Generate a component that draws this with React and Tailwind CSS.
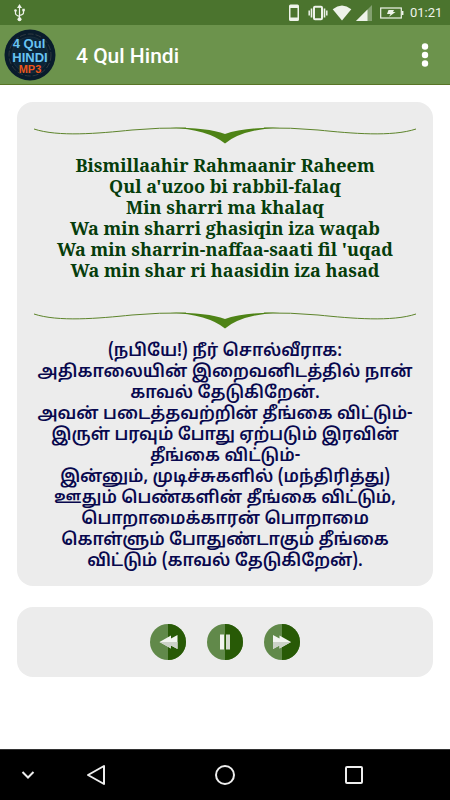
const VERSE = `Bismillaahir Rahmaanir Raheem
Qul a'uzoo bi rabbil-falaq
Min sharri ma khalaq
Wa min sharri ghasiqin iza waqab
Wa min sharrin-naffaa-saati fil 'uqad
Wa min shar ri haasidin iza hasad`;

const TRANSLATION = `(நபியே!) நீர் சொல்வீராக:
அதிகாலையின் இறைவனிடத்தில் நான்
காவல் தேடுகிறேன்.
அவன் படைத்தவற்றின் தீங்கை விட்டும்-
இருள் பரவும் போது ஏற்படும் இரவின்
தீங்கை விட்டும்-
இன்னும், முடிச்சுகளில் (மந்திரித்து)
ஊதும் பெண்களின் தீங்கை விட்டும்,
பொறாமைக்காரன் பொறாமை
கொள்ளும் போதுண்டாகும் தீங்கை
விட்டும் (காவல் தேடுகிறேன்).`;

const StatusBar = () => (
  <div className="flex h-[25px] items-center bg-[#4b742e] pl-3 pr-2 text-[#eef3ea]">
    <svg viewBox="0 0 16 18" className="h-[18px] w-4" fill="none" stroke="currentColor">
      <path d="M7.500 3v12M3.500 7v2.500q0 1.500 4 3M11.500 6.500V9q0 1.500-4 2.500" strokeWidth="1.200" />
      <path d="M7.500 0 5 4h5zM10.300 4.800h2.500v2.500h-2.500z" fill="currentColor" stroke="none" />
      <circle cx="3.500" cy="6.500" r="1.300" fill="currentColor" stroke="none" />
      <circle cx="7.500" cy="15.300" r="2" fill="currentColor" stroke="none" />
    </svg>
    <div className="ml-auto flex items-center">
      <svg viewBox="0 0 12 18" className="h-[18px] w-3">
        <path
          d="M2.500.500h7q1.500 0 1.500 1.500v13.500q0 1.500-1.500 1.500h-7Q1 17 1 15.500V2Q1 .500 2.500.500zM2.500 4v9.500h7V4z"
          fill="currentColor"
          fillRule="evenodd"
        />
      </svg>
      <svg viewBox="0 0 20 16" className="ml-2 h-4 w-5" fill="none" stroke="currentColor">
        <rect x="6" y="1.700" width="8" height="12.600" rx="1" strokeWidth="2" />
        <path d="M3.500 3.500v9M16.500 3.500v9" strokeWidth="1.600" />
        <path d="M1.200 5.500v5M18.800 5.500v5" strokeWidth="1.500" />
      </svg>
      <svg viewBox="0 0 20 16" className="ml-1 h-4 w-5" fill="currentColor">
        <path d="M.700 4.200Q10-3 19.300 4.200L10 15.500z" />
      </svg>
      <svg viewBox="0 0 16 16" className="ml-1 h-4 w-4" fill="currentColor">
        <path d="M16 0v16H0z" opacity="0.35" />
        <path d="M11.500 4.500V16H0z" />
      </svg>
      <svg viewBox="0 0 24 12" className="ml-2 h-3 w-6" fill="none" stroke="currentColor">
        <rect x=".700" y="1" width="20.600" height="10" strokeWidth="1.200" />
        <path d="M22.700 4v4" strokeWidth="1.500" />
        <path d="M8.500 3h5.500l-1 2h2.500L9 9.800 10.500 7H7z" fill="currentColor" stroke="none" />
      </svg>
      <span className="ml-1.5 w-8 text-[13px] leading-4">01:21</span>
    </div>
  </div>
);

const Logo = () => (
  <svg viewBox="0 0 52 52" className="h-[52px] w-[52px]" role="img" aria-label="4 Qul Hindi MP3">
    <circle cx="26" cy="26" r="25.500" fill="#091c2c" />
    <circle cx="26" cy="26" r="21" fill="none" stroke="#2f3940" strokeWidth="1" strokeDasharray="6 2" />
    <circle cx="26" cy="26" r="18" fill="#0a2438" stroke="#1c2f3b" strokeWidth="1" />
    <g fontFamily="Liberation Sans, sans-serif" fontWeight="bold" textAnchor="middle">
      <text x="25" y="19" fontSize="13" fill="#68c3f2">4 Qul</text>
      <text x="26" y="33" fontSize="13" fill="#68c3f2">HINDI</text>
      <text x="26" y="44" fontSize="11" fill="#ec5518">MP3</text>
    </g>
  </svg>
);

const AppBar = () => (
  <header className="flex h-[60px] items-center border-b border-[#587426] bg-[#6c934c] pl-1 pr-[9px]">
    <Logo />
    <h1 className="ml-5 pt-0.5 text-[21px] font-medium leading-7 text-white">4 Qul Hindi</h1>
    <button type="button" aria-label="More options" className="ml-auto grid h-10 w-8 place-items-center text-white">
      <svg viewBox="0 0 8 24" className="h-6 w-2" fill="currentColor">
        <circle cx="4" cy="3.500" r="3.200" />
        <circle cx="4" cy="12" r="3.200" />
        <circle cx="4" cy="20.500" r="3.200" />
      </svg>
    </button>
  </header>
);

const Ornament = () => (
  <svg viewBox="0 0 382 18" className="h-[18px] w-full" aria-hidden="true">
    <path
      d="M0 2C24 10 64 6.500 98 3Q126 .500 152 1M382 2C358 10 318 6.500 284 3Q256 .500 230 1"
      fill="none"
      stroke="#5d842b"
      strokeWidth="1"
    />
    <path
      d="M136 .500Q174 .500 191 7Q208 .500 246 .500Q208 2.500 191 16.500Q174 2.500 136 .500z"
      fill="#4e8316"
    />
  </svg>
);

const RewindIcon = () => (
  <>
    <path d="M9.500 18 21 11.500V14.500L27.500 11V25L21 21.500V24.500z" fill="#f2f4f0" />
    <path d="M9.500 18h18v7L21 21.500v3z" fill="#ccd2c8" />
  </>
);

const ForwardIcon = () => (
  <>
    <path d="M27 18 15.500 11.500V14.500L9 11V25L15.500 21.500V24.500z" fill="#f2f4f0" />
    <path d="M27 18H9v7l6.500-3.500v3z" fill="#ccd2c8" />
  </>
);

const PauseIcon = () => (
  <>
    <path d="M13 10.500h4v15h-4z" fill="#f2f4f0" />
    <path d="M19 10.500h4v15h-4z" fill="#d5dbd0" />
  </>
);

const PlayerButton = ({ label, children }) => (
  <button type="button" aria-label={label} className="h-9 w-9 rounded-full">
    <svg viewBox="0 0 36 36" className="h-9 w-9">
      <circle cx="18" cy="18" r="18" fill="#61894a" />
      <path d="M18 0a18 18 0 0 1 0 36z" fill="#285a06" />
      {children}
    </svg>
  </button>
);

const NavBar = () => (
  <nav className="mt-auto flex h-[51px] items-center border-t border-[#333] bg-black text-[#eee]">
    <button type="button" aria-label="Hide" className="grid h-10 w-14 place-items-center">
      <svg viewBox="0 0 14 10" className="h-2.5 w-3.5" fill="none" stroke="currentColor" strokeWidth="2">
        <path d="M1.500 2 7 7.500 12.500 2" />
      </svg>
    </button>
    <div className="flex flex-1 justify-between pl-6 pr-20">
      <button type="button" aria-label="Back" className="grid h-10 w-8 place-items-center">
        <svg viewBox="0 0 20 22" className="h-[22px] w-5" fill="none" stroke="currentColor" strokeWidth="2" strokeLinejoin="round">
          <path d="M2 11 18 2v18z" />
        </svg>
      </button>
      <button type="button" aria-label="Home" className="grid h-10 w-8 place-items-center">
        <svg viewBox="0 0 20 20" className="h-5 w-5" fill="none" stroke="currentColor" strokeWidth="2">
          <circle cx="10" cy="10" r="9" />
        </svg>
      </button>
      <button type="button" aria-label="Recent apps" className="grid h-10 w-8 place-items-center">
        <svg viewBox="0 0 18 18" className="h-[18px] w-[18px]" fill="none" stroke="currentColor" strokeWidth="2">
          <rect x="1" y="1" width="16" height="16" rx="1" />
        </svg>
      </button>
    </div>
  </nav>
);

const App = () => {
  return (
    <div className="flex min-h-screen flex-col bg-white font-['Roboto',sans-serif]">
      <StatusBar />
      <AppBar />
      <main className="flex flex-col gap-[21px] px-[17px] pb-6 pt-[17px]">
        <section className="rounded-2xl bg-[#ececec] px-[17px] pb-3.5 pt-[25px] text-center leading-[21px]">
          <Ornament />
          <p className="mb-[31px] mt-2.5 whitespace-pre-line font-['Noto_Serif','Droid_Serif','Liberation_Serif',serif] text-[18px] font-bold text-[#063d0b]">
            {VERSE}
          </p>
          <Ornament />
          <p
            lang="ta"
            className="mt-[11px] whitespace-pre-line font-['Noto_Sans_Tamil','Noto_Sans',sans-serif] text-[17px] font-semibold text-[#08084e]"
          >
            {TRANSLATION}
          </p>
        </section>
        <section className="flex h-[70px] items-center justify-center gap-[21px] rounded-2xl bg-[#ececec]">
          <PlayerButton label="Previous">
            <RewindIcon />
          </PlayerButton>
          <PlayerButton label="Pause">
            <PauseIcon />
          </PlayerButton>
          <PlayerButton label="Next">
            <ForwardIcon />
          </PlayerButton>
        </section>
      </main>
      <NavBar />
    </div>
  );
};

export default App;
